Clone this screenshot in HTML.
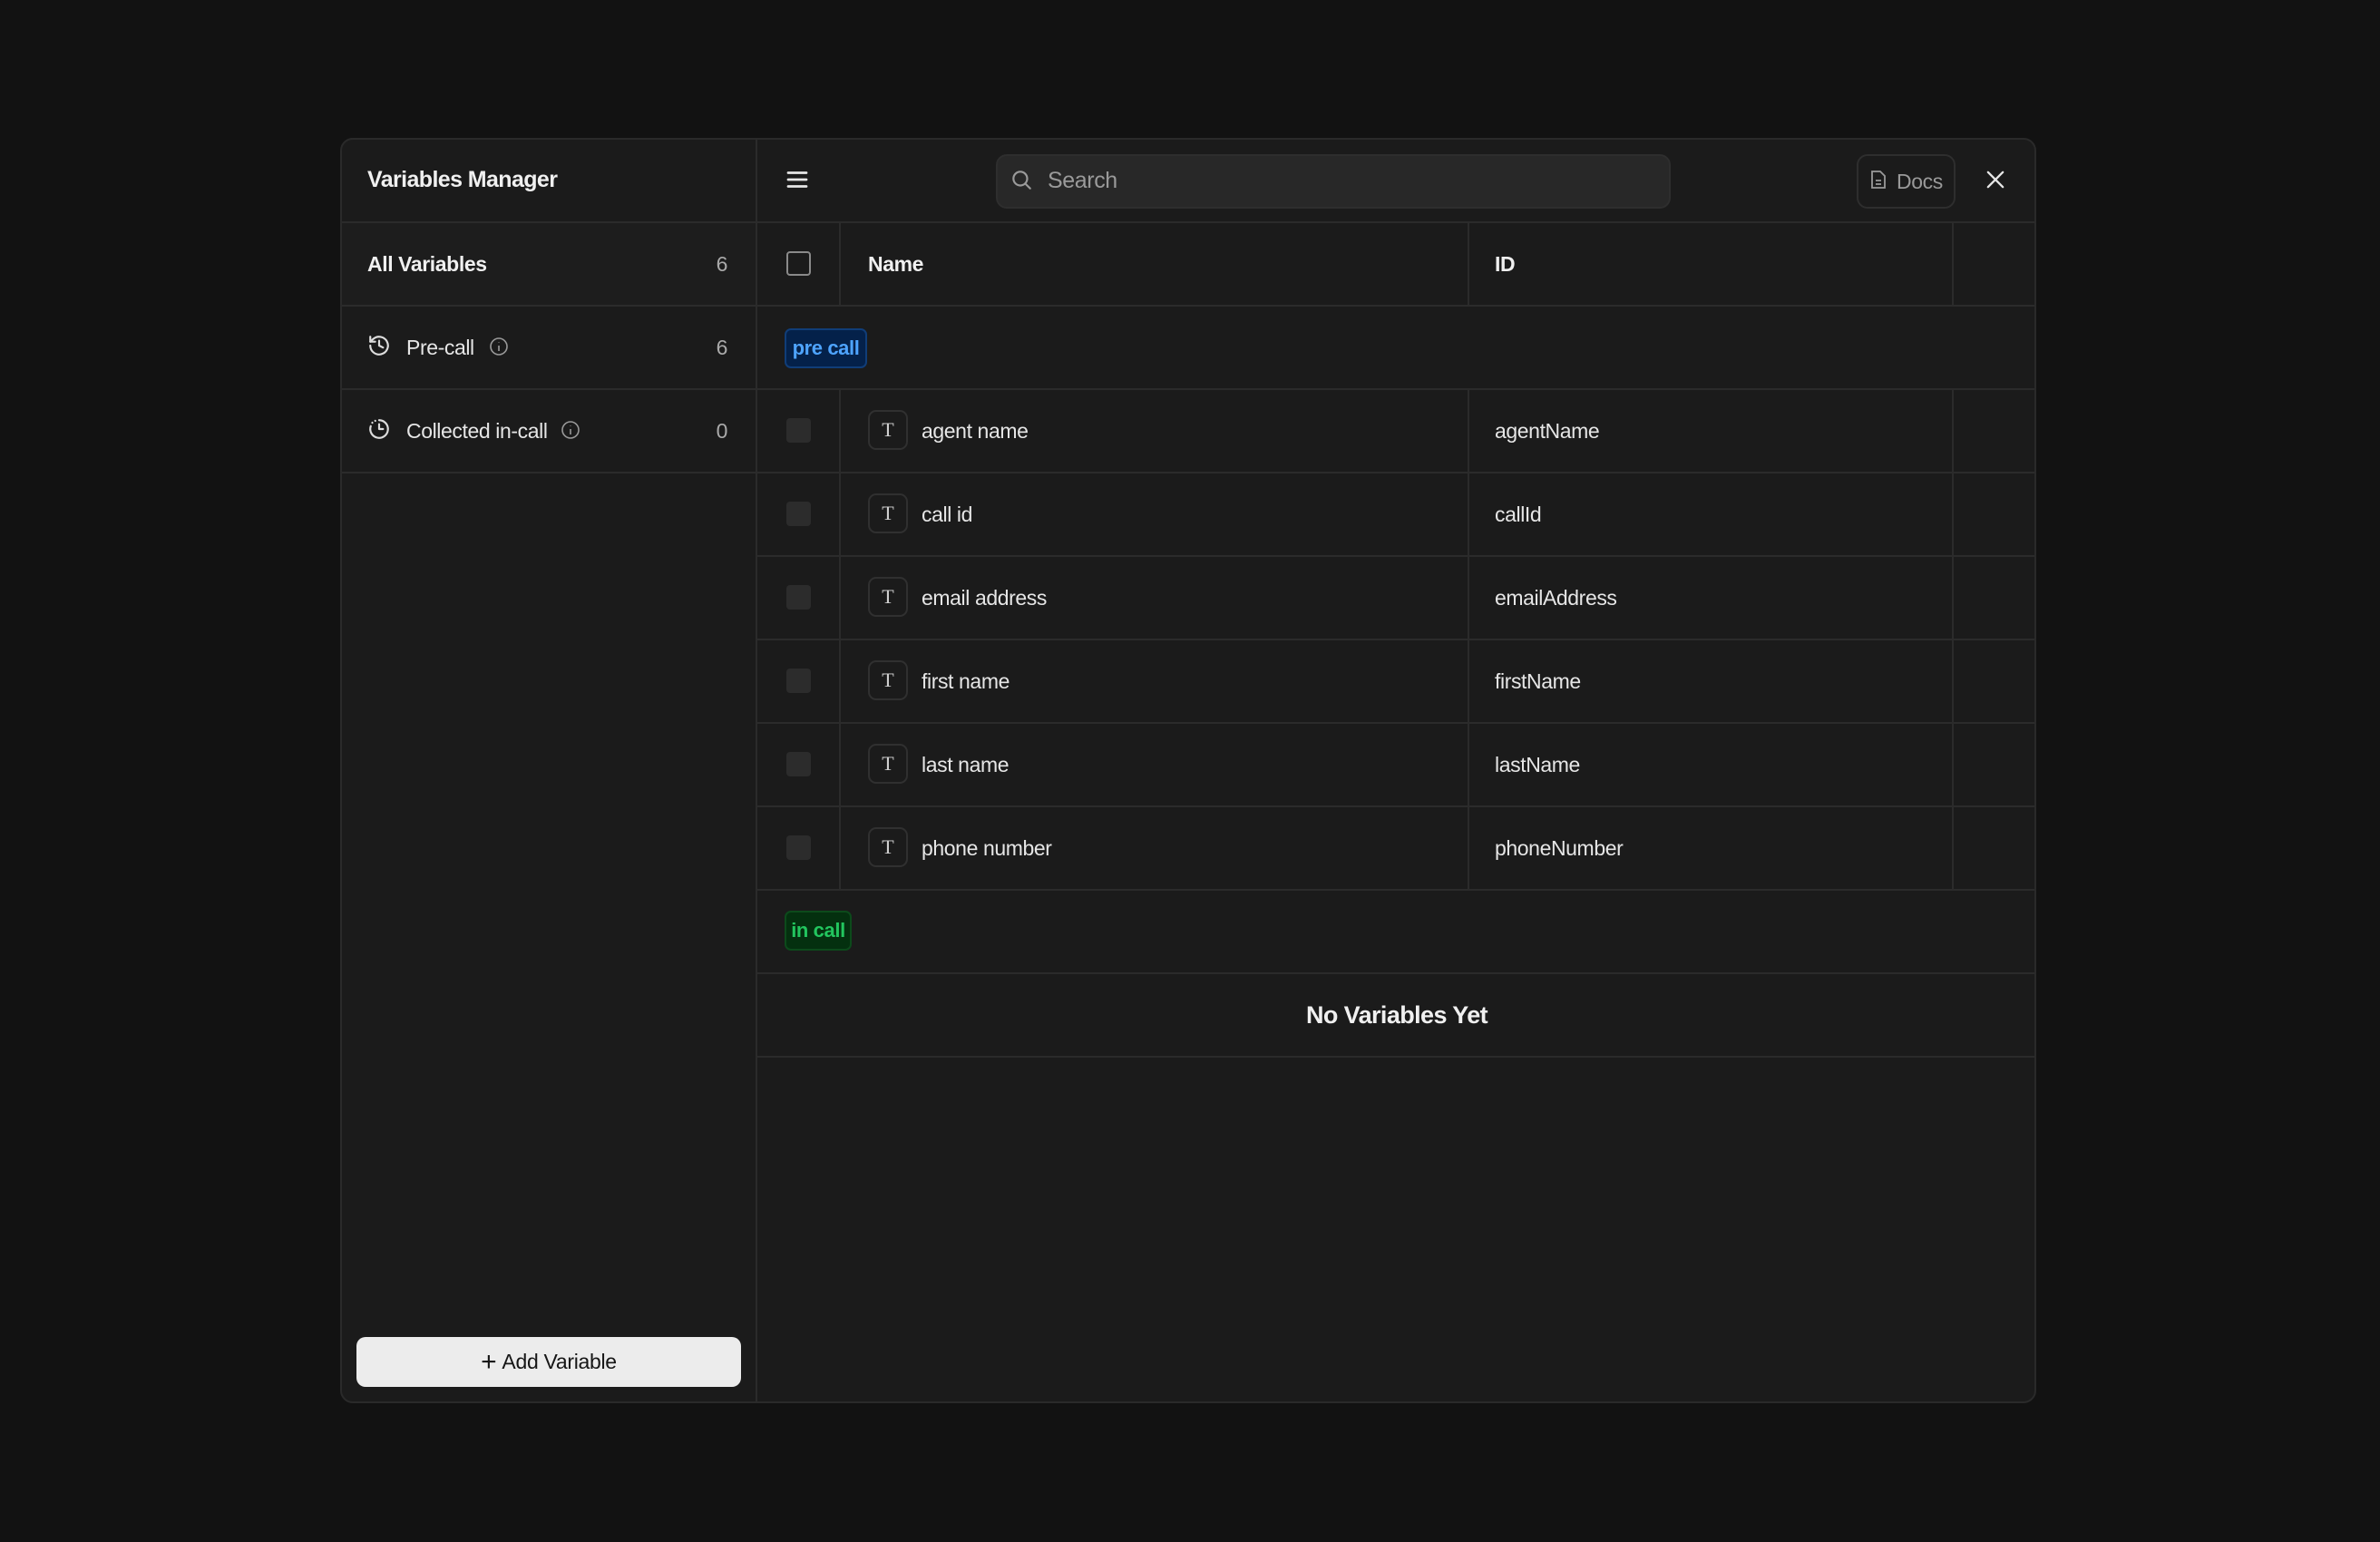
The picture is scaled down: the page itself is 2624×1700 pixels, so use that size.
<!DOCTYPE html>
<html><head><meta charset="utf-8"><style>
*{box-sizing:border-box;margin:0;padding:0}
body{width:2624px;height:1700px;background:#121212;font-family:"Liberation Sans",sans-serif;color:#e6e6e6;position:relative;overflow:hidden}
.modal{position:absolute;left:375px;top:152px;width:1870px;height:1395px;background:#1b1b1b;border:2px solid #2a2a2a;border-radius:14px;overflow:hidden}
.a{position:absolute}
.hl{position:absolute;height:2px;background:#2b2b2b}
.vl{position:absolute;width:2px;background:#2b2b2b}
.t{position:absolute;font-size:23px;line-height:28px;white-space:nowrap;letter-spacing:-0.4px}
.cb{position:absolute;left:490px;width:27px;height:27px;border-radius:4px;background:#2c2c2c}
.tb{position:absolute;left:580px;width:44px;height:44px;border:2px solid #303030;border-radius:9px;color:#cfcfcf;font-family:"Liberation Serif",serif;font-size:22px;text-align:center;line-height:40px}
</style></head><body>
<div class="modal">
  <div class="t" style="left:28px;top:30px;font-size:25px;font-weight:bold;color:#f0f0f0;letter-spacing:-0.6px">Variables Manager</div>
  <div class="hl" style="left:0;top:90px;width:1870px"></div>
  <div class="vl" style="left:456px;top:0;height:1395px"></div>
  <svg class="a" style="left:487px;top:29px" width="30" height="30" viewBox="0 0 24 24" fill="none" stroke="#e6e6e6" stroke-width="2.2" stroke-linecap="round"><path d="M4 6h16M4 12h16M4 18h16"/></svg>
  <div class="a" style="left:721px;top:16px;width:744px;height:60px;background:#282828;border:2px solid #2e2e2e;border-radius:12px"></div>
  <svg class="a" style="left:736px;top:31px" width="26" height="26" viewBox="0 0 24 24" fill="none" stroke="#9a9a9a" stroke-width="2" stroke-linecap="round"><circle cx="11" cy="11" r="7"/><path d="M16 16l5 5"/></svg>
  <div class="t" style="left:778px;top:31px;font-size:25px;color:#9a9a9a">Search</div>
  <div class="a" style="left:1670px;top:16px;width:109px;height:60px;border:2px solid #2e2e2e;border-radius:12px"></div>
  <svg class="a" style="left:1684px;top:33px" width="20" height="22" viewBox="0 0 20 22" fill="none" stroke="#9a9a9a" stroke-width="1.8"><path d="M3 2h9l5 5v13H3z"/><path d="M7 12h6M7 16h6"/></svg>
  <div class="t" style="left:1714px;top:32px;font-size:23px;color:#9a9a9a">Docs</div>
  <svg class="a" style="left:1809px;top:30px" width="28" height="28" viewBox="0 0 24 24" fill="none" stroke="#e6e6e6" stroke-width="2" stroke-linecap="round"><path d="M5 5l14 14M19 5L5 19"/></svg>

  <div class="a" style="left:0;top:92px;width:456px;height:92px;background:#1d1d1d"></div>
  <div class="t" style="left:28px;top:123px;font-weight:bold;color:#f0f0f0">All Variables</div>
  <div class="t" style="left:405px;top:123px;color:#aaa;width:20px;text-align:right">6</div>
  <div class="hl" style="left:0;top:182px;width:456px"></div>
  <svg class="a" style="left:28px;top:214px" width="26" height="26" viewBox="0 0 24 24" fill="none" stroke="#ddd" stroke-width="2" stroke-linecap="round" stroke-linejoin="round"><path d="M3 12a9 9 0 1 0 3-6.7L3 8"/><path d="M3 3v5h5"/><path d="M12 7v5l4 2"/></svg>
  <div class="t" style="left:71px;top:215px;color:#e6e6e6">Pre-call</div>
  <svg class="a" style="left:161px;top:216px" width="24" height="24" viewBox="0 0 24 24" fill="none" stroke="#999" stroke-width="1.6"><circle cx="12" cy="12" r="9"/><path d="M12 11v6M12 7.5v.5"/></svg>
  <div class="t" style="left:405px;top:215px;color:#aaa;width:20px;text-align:right">6</div>
  <div class="hl" style="left:0;top:274px;width:456px"></div>
  <svg class="a" style="left:28px;top:306px" width="26" height="26" viewBox="0 0 24 24" fill="none" stroke="#ddd" stroke-width="2" stroke-linecap="round" stroke-linejoin="round"><path d="M12 3a9 9 0 1 1-8.5 6"/><path d="M12 7v5h4"/><path d="M5 5.5l.1.1M8 3.6l.1.1"/></svg>
  <div class="t" style="left:71px;top:307px;color:#e6e6e6">Collected in-call</div>
  <svg class="a" style="left:240px;top:308px" width="24" height="24" viewBox="0 0 24 24" fill="none" stroke="#999" stroke-width="1.6"><circle cx="12" cy="12" r="9"/><path d="M12 11v6M12 7.5v.5"/></svg>
  <div class="t" style="left:405px;top:307px;color:#aaa;width:20px;text-align:right">0</div>
  <div class="hl" style="left:0;top:366px;width:456px"></div>
  <div class="a" style="left:16px;top:1320px;width:424px;height:55px;background:#ececec;border-radius:10px;color:#161616;font-size:23px;line-height:55px;text-align:center;letter-spacing:-0.3px"><span style="font-size:30px;vertical-align:-2px;margin-right:6px">+</span>Add Variable</div>

  <div class="vl" style="left:548px;top:90px;height:92px"></div>
  <div class="vl" style="left:1241px;top:90px;height:92px"></div>
  <div class="vl" style="left:1775px;top:90px;height:92px"></div>
  <div class="a" style="left:490px;top:123px;width:27px;height:27px;border:2px solid #8a8a8a;border-radius:4px"></div>
  <div class="t" style="left:580px;top:123px;font-weight:bold;color:#f0f0f0">Name</div>
  <div class="t" style="left:1271px;top:123px;font-weight:bold;color:#f0f0f0">ID</div>
  <div class="hl" style="left:456px;top:182px;width:1414px"></div>
  <div class="a" style="left:488px;top:208px;width:91px;height:44px;background:#04214a;border:2px solid #103d78;border-radius:7px;color:#4ea4ff;font-weight:bold;font-size:22px;line-height:40px;text-align:center;letter-spacing:-0.4px">pre call</div>
  <div class="hl" style="left:456px;top:274px;width:1414px"></div>

  <div class="vl" style="left:548px;top:274px;height:552px"></div>
  <div class="vl" style="left:1241px;top:274px;height:552px"></div>
  <div class="vl" style="left:1775px;top:274px;height:552px"></div>

  <div class="cb" style="top:307px"></div><div class="tb" style="top:298px">T</div>
  <div class="t" style="left:639px;top:307px">agent name</div><div class="t" style="left:1271px;top:307px">agentName</div>
  <div class="hl" style="left:456px;top:366px;width:1414px"></div>
  <div class="cb" style="top:399px"></div><div class="tb" style="top:390px">T</div>
  <div class="t" style="left:639px;top:399px">call id</div><div class="t" style="left:1271px;top:399px">callId</div>
  <div class="hl" style="left:456px;top:458px;width:1414px"></div>
  <div class="cb" style="top:491px"></div><div class="tb" style="top:482px">T</div>
  <div class="t" style="left:639px;top:491px">email address</div><div class="t" style="left:1271px;top:491px">emailAddress</div>
  <div class="hl" style="left:456px;top:550px;width:1414px"></div>
  <div class="cb" style="top:583px"></div><div class="tb" style="top:574px">T</div>
  <div class="t" style="left:639px;top:583px">first name</div><div class="t" style="left:1271px;top:583px">firstName</div>
  <div class="hl" style="left:456px;top:642px;width:1414px"></div>
  <div class="cb" style="top:675px"></div><div class="tb" style="top:666px">T</div>
  <div class="t" style="left:639px;top:675px">last name</div><div class="t" style="left:1271px;top:675px">lastName</div>
  <div class="hl" style="left:456px;top:734px;width:1414px"></div>
  <div class="cb" style="top:767px"></div><div class="tb" style="top:758px">T</div>
  <div class="t" style="left:639px;top:767px">phone number</div><div class="t" style="left:1271px;top:767px">phoneNumber</div>
  <div class="hl" style="left:456px;top:826px;width:1414px"></div>

  <div class="a" style="left:488px;top:850px;width:74px;height:44px;background:#04300f;border:2px solid #0c4a1b;border-radius:7px;color:#22c55e;font-weight:bold;font-size:22px;line-height:40px;text-align:center;letter-spacing:-0.4px">in call</div>
  <div class="hl" style="left:456px;top:918px;width:1414px"></div>
  <div class="t" style="left:456px;top:949px;width:1414px;text-align:center;font-weight:bold;font-size:27px;line-height:32px;color:#f0f0f0;letter-spacing:-0.6px">No Variables Yet</div>
  <div class="hl" style="left:456px;top:1010px;width:1414px"></div>
</div>
</body></html>
